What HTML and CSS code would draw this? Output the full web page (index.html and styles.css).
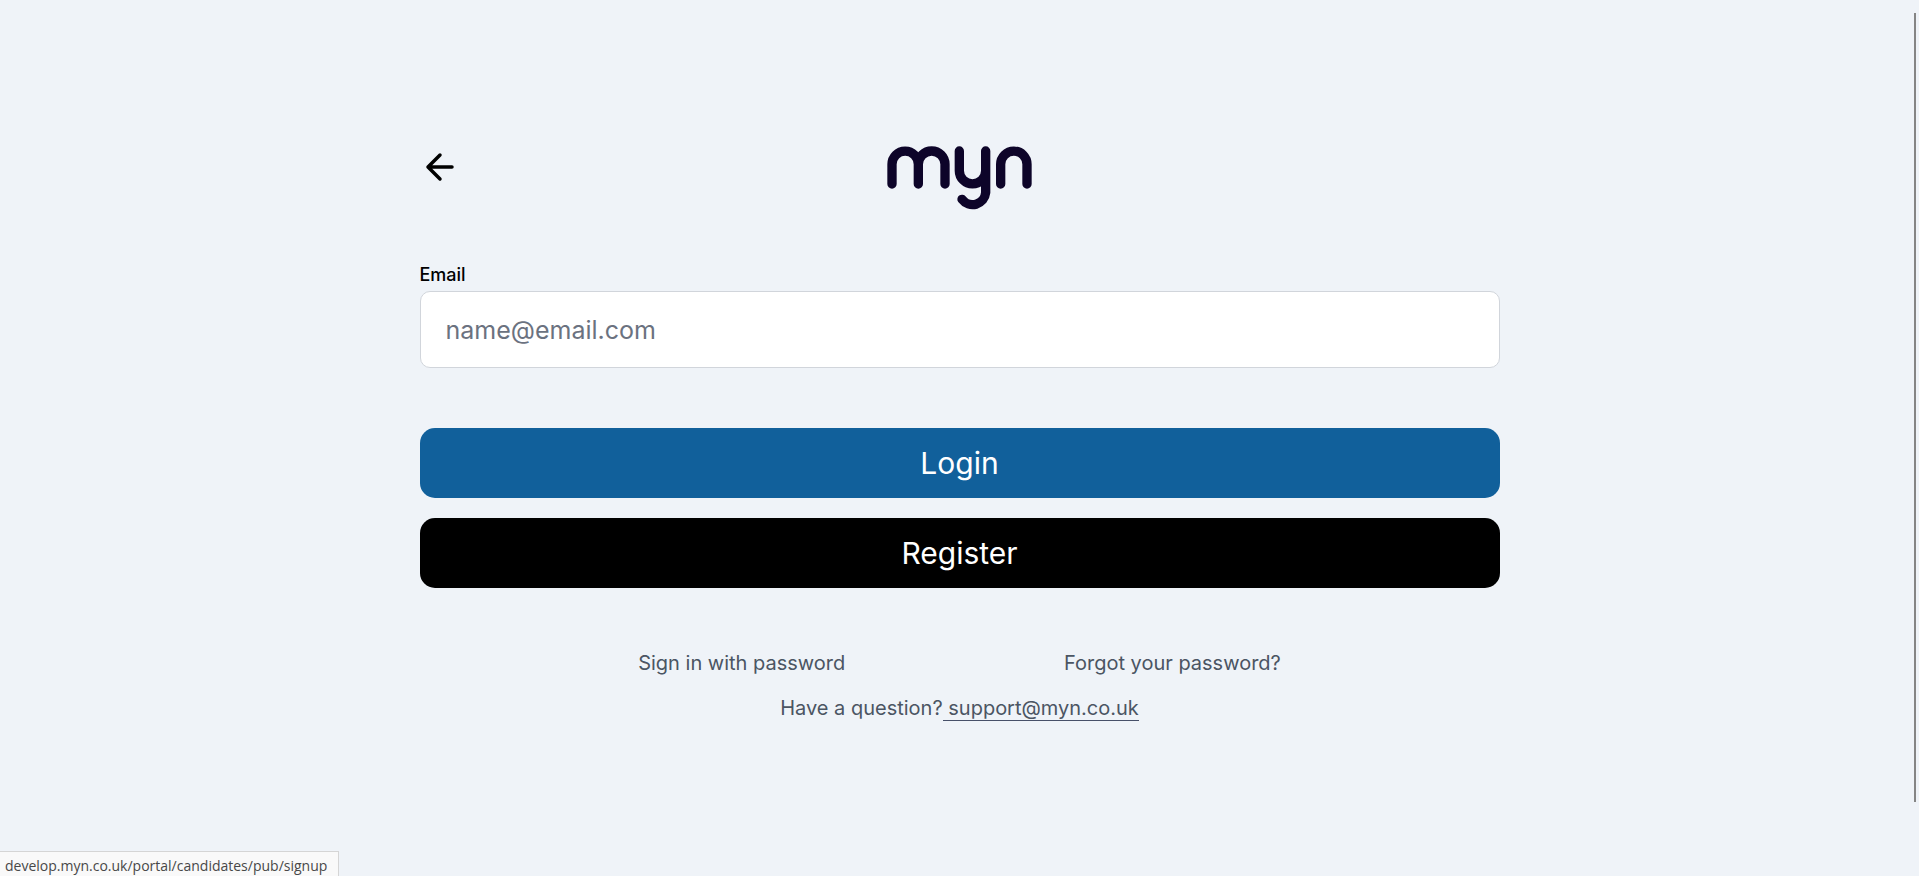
FILE: index.html
```html
<!DOCTYPE html>
<html lang="en">
<head>
<meta charset="utf-8">
<meta name="viewport" content="width=device-width, initial-scale=1">
<title>myn login</title>
<link rel="stylesheet" href="styles.css">
</head>
<body>
<main class="page">
  <header class="header">
    <button class="back" type="button" aria-label="Back">
      <svg width="40" height="40" viewBox="0 0 40 40" fill="none" stroke="#000" stroke-width="3.500" stroke-linecap="round" stroke-linejoin="round" aria-hidden="true"><path d="M32 20H8M20 8L8 20l12 12"/></svg>
    </button>
    <svg class="logo" width="145" height="65" viewBox="52 44 435 195" fill="none" stroke="#0d0429" stroke-width="28" stroke-linecap="round" role="img" aria-label="myn">
      <path d="M67 158V99a39.500 39.500 0 0 1 79 0V158M146 99a40 40 0 0 1 80 0V158"/>
      <path d="M269 59v59a39.500 39.500 0 0 0 79 0M348 59V184a39.500 39.500 0 0 1-71 20"/>
      <path d="M393 158V99a39.500 39.500 0 0 1 79 0V158"/>
    </svg>
  </header>
  <form class="form">
    <label class="label" for="email">Email</label>
    <input class="input" id="email" type="email" placeholder="name@email.com">
    <div class="actions">
      <button class="button" type="button">Login</button>
      <button class="button button-dark" type="button">Register</button>
    </div>
  </form>
  <nav class="links">
    <a class="link" href="#password">Sign in with password</a>
    <a class="link" href="#forgot">Forgot your password?</a>
  </nav>
  <p class="question">Have a question?<a class="support" href="mailto:support@myn.co.uk"> support@myn.co.uk</a></p>
</main>
<div class="scrollbar"></div>
<div class="status">develop.myn.co.uk/portal/candidates/pub/signup</div>
</body>
</html>
```
FILE: styles.css
```css
* { box-sizing: border-box; }
body {
  margin: 0;
  background: #eff3f8;
  color: #000;
  font-family: Inter, "Liberation Sans", sans-serif;
}
.page {
  max-width: 1080px;
  margin: 0 auto;
  padding-top: 146px;
}
.header {
  display: grid;
  grid-template-columns: 1fr auto 1fr;
  align-items: start;
}
.back {
  display: flex;
  justify-self: start;
  margin-top: 1px;
  padding: 0;
  border: 0;
  background: none;
}
.logo { display: block; }
.form {
  display: flex;
  flex-direction: column;
  margin-top: 52px;
}
.label {
  font-size: 18px;
  font-weight: 500;
  line-height: 24px;
}
.input {
  width: 100%;
  height: 77px;
  margin-top: 4px;
  padding: 0 25px;
  border: 1px solid #d1d5db;
  border-radius: 10px;
  background: #fff;
  font: 400 25px Inter, "Liberation Sans", sans-serif;
}
.input::placeholder { color: #6b7280; opacity: 1; }
.actions {
  display: flex;
  flex-direction: column;
  gap: 20px;
  margin-top: 60px;
}
.button {
  height: 70px;
  border: 0;
  border-radius: 15px;
  background: #11609b;
  color: #fff;
  font: 400 30px Inter, "Liberation Sans", sans-serif;
}
.button-dark { background: #000; }
.links {
  display: flex;
  justify-content: space-evenly;
  margin-top: 60px;
}
.link, .question {
  color: #4b5563;
  font-size: 20px;
  line-height: 30px;
  text-decoration: none;
}
.question {
  margin: 15px 0 0;
  text-align: center;
}
.support {
  border-bottom: 1px solid #475069;
  color: inherit;
  text-decoration: none;
}
.scrollbar {
  position: fixed;
  top: 13px;
  right: 3px;
  bottom: 74px;
  width: 2px;
  background: #858585;
}
.status {
  position: fixed;
  left: 0;
  bottom: 0;
  height: 25px;
  padding: 3px 11px 0 5px;
  border: solid #d5d5d5;
  border-width: 1px 1px 0 0;
  background: #f9f9f9;
  color: #484848;
  font: 14px/22px "Open Sans", "Noto Sans", sans-serif;
}
```
